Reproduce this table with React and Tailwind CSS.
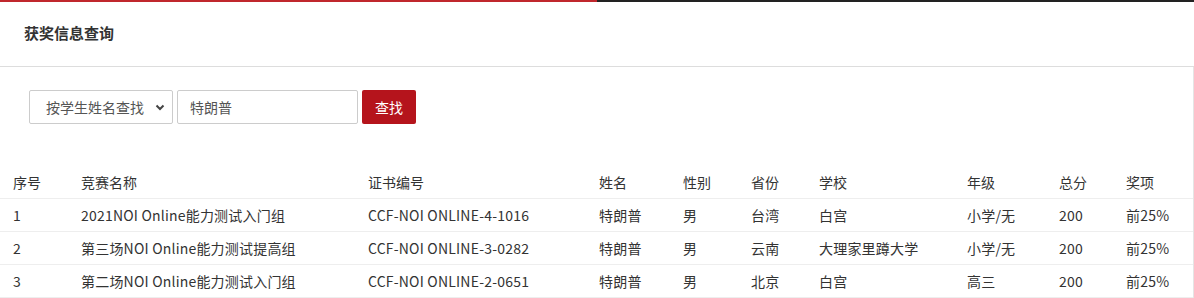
import React from 'react';

const COLS = [
  { key: 'no', label: '序号', w: 'w-[68px]' },
  { key: 'contest', label: '竞赛名称', w: 'w-[287px]' },
  { key: 'cert', label: '证书编号', w: 'w-[231px]' },
  { key: 'name', label: '姓名', w: 'w-[84px]' },
  { key: 'sex', label: '性别', w: 'w-[68px]' },
  { key: 'prov', label: '省份', w: 'w-[68px]' },
  { key: 'school', label: '学校', w: 'w-[148px]' },
  { key: 'grade', label: '年级', w: 'w-[92px]' },
  { key: 'score', label: '总分', w: 'w-[67px]' },
  { key: 'award', label: '奖项', w: '' },
];

const ROWS = [
  { no: '1', contest: '2021NOI Online能力测试入门组', cert: 'CCF-NOI ONLINE-4-1016', name: '特朗普', sex: '男', prov: '台湾', school: '白宫', grade: '小学/无', score: '200', award: '前25%' },
  { no: '2', contest: '第三场NOI Online能力测试提高组', cert: 'CCF-NOI ONLINE-3-0282', name: '特朗普', sex: '男', prov: '云南', school: '大理家里蹲大学', grade: '小学/无', score: '200', award: '前25%' },
  { no: '3', contest: '第二场NOI Online能力测试入门组', cert: 'CCF-NOI ONLINE-2-0651', name: '特朗普', sex: '男', prov: '北京', school: '白宫', grade: '高三', score: '200', award: '前25%' },
];

export default function App() {
  return (
    <div className="w-[1194px] h-[298px] overflow-hidden bg-white text-[#333] font-['Noto_Sans_CJK_SC','Noto_Sans',sans-serif]">
      {/* loading bar */}
      <div className="flex h-[2px]">
        <div className="w-[597px] bg-[#c0272d]" />
        <div className="flex-1 bg-[#222]" />
      </div>

      <div className="h-[65px] border-b border-[#ddd] flex items-center pl-[24px] pb-[3px]">
        <h2 className="text-[15px] font-bold text-[#333] leading-none">获奖信息查询</h2>
      </div>

      <div className="border-r border-[#e5e5e5]">
        {/* search */}
        <div className="flex gap-[4px] pl-[29px] pt-[23px] h-[99px]">
          <div className="relative w-[144px] h-[34px] border border-[#ccc] rounded-[2px] flex items-center pl-[16px] text-[14px] text-[#555]">
            按学生姓名查找
            <svg className="absolute right-[7px] top-[13px]" width="10" height="7" viewBox="0 0 10 7">
              <path d="M1.5 1.5 L5 5 L8.5 1.5" fill="none" stroke="#444" strokeWidth="2" />
            </svg>
          </div>
          <div className="w-[181px] h-[34px] border border-[#ccc] rounded-[2px] flex items-center pl-[12px] text-[14px] text-[#555]">
            特朗普
          </div>
          <button className="w-[54px] h-[34px] bg-[#b5141c] rounded-[2px] text-white text-[14px]">查找</button>
        </div>

        {/* table */}
        <div className="text-[14px]">
          <div className="flex h-[33px] items-end pb-[6px] border-b border-[#eee]">
            {COLS.map((c) => (
              <div key={c.key} className={`${c.w} ${c.w ? 'shrink-0' : 'flex-1'} pl-[13px] leading-[20px]`}>{c.label}</div>
            ))}
          </div>
          {ROWS.map((r) => (
            <div key={r.no} className="flex h-[33px] items-center border-b border-[#eee]">
              {COLS.map((c) => (
                <div key={c.key} className={`${c.w} ${c.w ? 'shrink-0' : 'flex-1'} pl-[13px] leading-[20px] whitespace-nowrap tracking-[0.2px]`}>{r[c.key]}</div>
              ))}
            </div>
          ))}
        </div>
      </div>
    </div>
  );
}
